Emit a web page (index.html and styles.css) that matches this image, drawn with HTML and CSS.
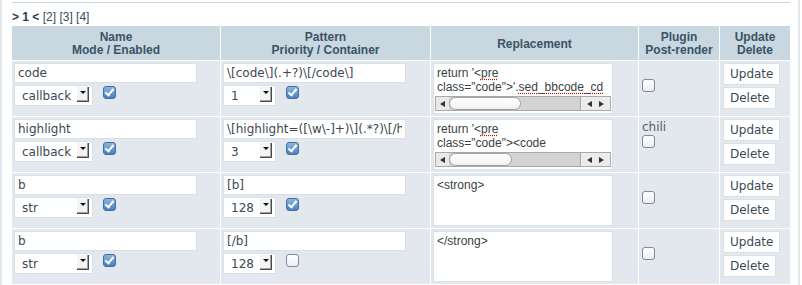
FILE: index.html
```html
<!DOCTYPE html>
<html>
<head>
    <title>BBCode</title>
    <link rel="stylesheet" href="styles.css">
</head>
<body>
    <div class="page">
        <div class="topline"></div>
        <p class="pager"><b>&gt; 1 &lt;</b> <a href="#">[2]</a> <a href="#">[3]</a> <a href="#">[4]</a></p>

        <table class="bbcodes">
            <colgroup>
                <col class="c-name">
                <col class="c-pattern">
                <col class="c-repl">
                <col class="c-plug">
                <col class="c-act">
            </colgroup>
            <thead>
                <tr>
                    <th>Name<br>Mode / Enabled</th>
                    <th>Pattern<br>Priority / Container</th>
                    <th>Replacement</th>
                    <th>Plugin<br>Post-render</th>
                    <th>Update<br>Delete</th>
                </tr>
            </thead>
            <tbody>
                <tr>
                    <td>
                        <input type="text" class="txt" value="code">
                        <div class="line">
                            <span class="sel sel-mode"><select><option>callback</option></select><i class="arrow"></i></span>
                            <input type="checkbox" class="chk" checked>
                        </div>
                    </td>
                    <td>
                        <input type="text" class="txt" value="\[code\](.+?)\[/code\]">
                        <div class="line">
                            <span class="sel sel-prio"><select><option>1</option></select><i class="arrow"></i></span>
                            <input type="checkbox" class="chk" checked>
                        </div>
                    </td>
                    <td>
                        <div class="ta">
                            <div class="ta-text">return '&lt;<span class="sp">pre</span>
class="code"&gt;'.<span class="sp">sed_bbcode_cd</span></div>
                            <div class="hscroll">
                                <span class="sb-left"><i class="tri-l"></i></span>
                                <span class="thumb"></span>
                                <span class="sb-fill"></span>
                                <span class="sb-right"><i class="tri-l"></i><i class="tri-r"></i></span>
                            </div>
                        </div>
                    </td>
                    <td>
                        <div class="pname"></div>
                        <input type="checkbox" class="chk">
                    </td>
                    <td>
                        <button class="act">Update</button>
                        <button class="act">Delete</button>
                    </td>
                </tr>
                <tr>
                    <td>
                        <input type="text" class="txt" value="highlight">
                        <div class="line">
                            <span class="sel sel-mode"><select><option>callback</option></select><i class="arrow"></i></span>
                            <input type="checkbox" class="chk" checked>
                        </div>
                    </td>
                    <td>
                        <input type="text" class="txt" value="\[highlight=([\w\-]+)\](.*?)\[/highlight\]">
                        <div class="line">
                            <span class="sel sel-prio"><select><option>3</option></select><i class="arrow"></i></span>
                            <input type="checkbox" class="chk" checked>
                        </div>
                    </td>
                    <td>
                        <div class="ta">
                            <div class="ta-text">return '&lt;<span class="sp">pre</span>
class="code"&gt;&lt;code</div>
                            <div class="hscroll">
                                <span class="sb-left"><i class="tri-l"></i></span>
                                <span class="thumb thumb-short"></span>
                                <span class="sb-fill"></span>
                                <span class="sb-right"><i class="tri-l"></i><i class="tri-r"></i></span>
                            </div>
                        </div>
                    </td>
                    <td>
                        <div class="pname">chili</div>
                        <input type="checkbox" class="chk">
                    </td>
                    <td>
                        <button class="act">Update</button>
                        <button class="act">Delete</button>
                    </td>
                </tr>
                <tr>
                    <td>
                        <input type="text" class="txt" value="b">
                        <div class="line">
                            <span class="sel sel-mode"><select><option>str</option></select><i class="arrow"></i></span>
                            <input type="checkbox" class="chk" checked>
                        </div>
                    </td>
                    <td>
                        <input type="text" class="txt" value="[b]">
                        <div class="line">
                            <span class="sel sel-prio"><select><option>128</option></select><i class="arrow"></i></span>
                            <input type="checkbox" class="chk" checked>
                        </div>
                    </td>
                    <td>
                        <div class="ta"><div class="ta-text">&lt;strong&gt;</div></div>
                    </td>
                    <td>
                        <div class="pname"></div>
                        <input type="checkbox" class="chk">
                    </td>
                    <td>
                        <button class="act">Update</button>
                        <button class="act">Delete</button>
                    </td>
                </tr>
                <tr>
                    <td>
                        <input type="text" class="txt" value="b">
                        <div class="line">
                            <span class="sel sel-mode"><select><option>str</option></select><i class="arrow"></i></span>
                            <input type="checkbox" class="chk" checked>
                        </div>
                    </td>
                    <td>
                        <input type="text" class="txt" value="[/b]">
                        <div class="line">
                            <span class="sel sel-prio"><select><option>128</option></select><i class="arrow"></i></span>
                            <input type="checkbox" class="chk">
                        </div>
                    </td>
                    <td>
                        <div class="ta"><div class="ta-text">&lt;/strong&gt;</div></div>
                    </td>
                    <td>
                        <div class="pname"></div>
                        <input type="checkbox" class="chk">
                    </td>
                    <td>
                        <button class="act">Update</button>
                        <button class="act">Delete</button>
                    </td>
                </tr>
            </tbody>
        </table>
    </div>
</body>
</html>
```

FILE: styles.css
```css
body {
    margin: 0;
    font-family: "Liberation Sans", Arial, sans-serif;
    font-size: 12px;
    color: #333;
    background-color: #fff;
}
.page {
    width: 800px;
    height: 285px;
    box-sizing: border-box;
    border-left: 2px solid #e3e8ec;
    border-right: 2px solid #e3e8ec;
    padding: 2px 0 0 9px;
    overflow: hidden;
}
.topline {
    width: 778px;
    margin-left: 1px;
    border-top: 1px solid #c9d6df;
}
.pager {
    margin: 7px 0 0 1px;
    line-height: 15px;
    color: #3a4e5e;
}
.pager b {
    color: #2b3c4a;
}
.pager a {
    color: #3a4e5e;
    text-decoration: none;
}

/* table */
.bbcodes {
    width: 780px;
    table-layout: fixed;
    border-collapse: separate;
    border-spacing: 1px;
}
.c-name { width: 208px; }
.c-pattern { width: 209px; }
.c-repl { width: 207px; }
.c-plug { width: 80px; }
.c-act { width: 70px; }
.bbcodes th {
    background-color: #c8d7e0;
    color: #3b5366;
    font-size: 12px;
    font-weight: bold;
    line-height: 13px;
    padding: 5px 2px 3px;
    text-align: center;
}
.bbcodes td {
    background-color: #e2e8ed;
    padding: 2px;
    height: 51px;
    vertical-align: top;
}

/* inputs */
.txt {
    display: block;
    width: 183px;
    height: 20px;
    box-sizing: border-box;
    margin: 0 0 2px;
    padding: 0 3px;
    border: 1px solid #dae1e6;
    background: #fff;
    font-family: "DejaVu Sans", Verdana, sans-serif;
    font-size: 12px;
    color: #3d4852;
}
.line {
    display: flex;
    align-items: flex-start;
}
.sel {
    display: inline-flex;
    align-items: flex-start;
    height: 21px;
    box-sizing: border-box;
    border: 1px solid #dae1e6;
    background: #fff;
}
.sel-mode { width: 79px; }
.sel-prio { width: 53px; }
.sel select {
    -webkit-appearance: none;
    appearance: none;
    flex: 1;
    min-width: 0;
    height: 19px;
    border: 0;
    padding: 0 0 0 7px;
    background: transparent;
    font-family: "DejaVu Sans", Verdana, sans-serif;
    font-size: 12px;
    color: #3d4852;
    outline: none;
}
.arrow {
    display: flex;
    justify-content: center;
    width: 12px;
    height: 15px;
    margin: 1px 3px 0 0;
    padding-top: 4px;
    box-sizing: border-box;
    background: #f4f4f4;
    border-right: 1px solid #4a4a4a;
    border-bottom: 1px solid #4a4a4a;
    box-shadow: inset -1px -1px 0 #a0a0a0;
}
.arrow::before {
    content: "";
    width: 0;
    height: 0;
    border-top: 3px solid #111;
    border-left: 3px solid transparent;
    border-right: 3px solid transparent;
}

/* checkboxes */
.chk {
    -webkit-appearance: none;
    appearance: none;
    position: relative;
    width: 13px;
    height: 13px;
    margin: 1px 0 0 10px;
    box-sizing: border-box;
    border: 1px solid #808a93;
    border-radius: 3px;
    background: linear-gradient(#ffffff, #eceff2);
}
.chk:checked {
    border-color: #3e6e9f;
    background: linear-gradient(#8db4df, #4a82c0);
}
.chk:checked::after {
    content: "";
    position: absolute;
    left: 3px;
    top: 0;
    width: 3px;
    height: 7px;
    border: solid #fff;
    border-width: 0 2px 2px 0;
    transform: rotate(40deg);
}

/* replacement box */
.ta {
    width: 180px;
    height: 51px;
    box-sizing: border-box;
    border: 1px solid #dae1e6;
    background: #fff;
    padding: 2px 1px;
    overflow: hidden;
}
.ta-text {
    height: 28px;
    padding-left: 2px;
    line-height: 14px;
    white-space: pre;
    overflow: hidden;
    color: #3a3f44;
}
.sp {
    text-decoration: underline dotted #d00000;
    text-underline-offset: 2px;
}
.hscroll {
    display: flex;
    height: 15px;
    margin-top: 2px;
    box-sizing: border-box;
    border: 1px solid #a9a9a9;
    background: #d3d3d3;
}
.sb-left {
    display: flex;
    align-items: center;
    justify-content: center;
    width: 13px;
    background: #e9e9e9;
}
.thumb {
    width: 72px;
    border: 1px solid #a0a0a0;
    border-radius: 7px;
    box-sizing: border-box;
    background: linear-gradient(#ffffff, #f1f1f1);
}
.thumb-short { width: 63px; }
.sb-fill { flex: 1; }
.sb-right {
    display: flex;
    align-items: center;
    justify-content: space-evenly;
    width: 29px;
    border-left: 1px solid #a9a9a9;
    background: #ececec;
}
.tri-l, .tri-r {
    width: 0;
    height: 0;
    border-top: 3px solid transparent;
    border-bottom: 3px solid transparent;
}
.tri-l { border-right: 5px solid #333; }
.tri-r { border-left: 5px solid #333; }

/* plugin */
.pname {
    height: 16px;
    line-height: 16px;
    padding-left: 1px;
    font-family: "DejaVu Sans", Verdana, sans-serif;
    font-size: 12px;
    color: #555f66;
}
.pname + .chk {
    display: block;
    margin: 0 0 0 1px;
}

/* buttons */
.act {
    display: block;
    height: 22px;
    margin: 0 0 2px 1px;
    padding: 0 6px;
    border: 1px solid #dae1e6;
    background: #fff;
    font-family: "DejaVu Sans", Verdana, sans-serif;
    font-size: 12px;
    color: #3b4b57;
    cursor: pointer;
}
```
